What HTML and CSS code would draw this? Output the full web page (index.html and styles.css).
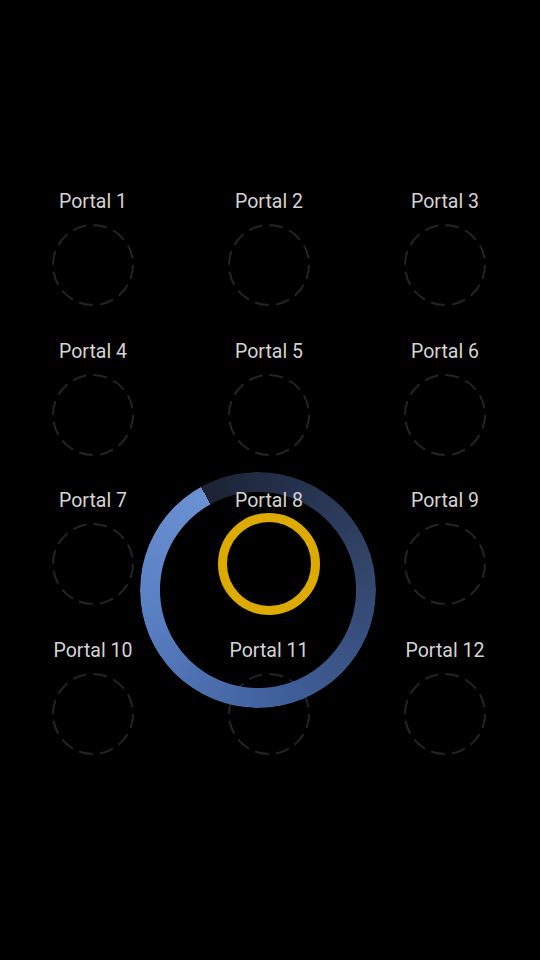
FILE: index.html
```html
<!DOCTYPE html>
<html>
<head>
<meta charset="utf-8">
<link rel="stylesheet" href="styles.css">
</head>
<body>
<div class="screen">
  <div class="grid">
    <div class="cell"><div class="label">Portal 1</div><svg class="portal" viewBox="0 0 84 84"><circle cx="42" cy="42" r="40"/></svg></div>
    <div class="cell"><div class="label">Portal 2</div><svg class="portal" viewBox="0 0 84 84"><circle cx="42" cy="42" r="40"/></svg></div>
    <div class="cell"><div class="label">Portal 3</div><svg class="portal" viewBox="0 0 84 84"><circle cx="42" cy="42" r="40"/></svg></div>
    <div class="cell"><div class="label">Portal 4</div><svg class="portal" viewBox="0 0 84 84"><circle cx="42" cy="42" r="40"/></svg></div>
    <div class="cell"><div class="label">Portal 5</div><svg class="portal" viewBox="0 0 84 84"><circle cx="42" cy="42" r="40"/></svg></div>
    <div class="cell"><div class="label">Portal 6</div><svg class="portal" viewBox="0 0 84 84"><circle cx="42" cy="42" r="40"/></svg></div>
    <div class="cell"><div class="label">Portal 7</div><svg class="portal" viewBox="0 0 84 84"><circle cx="42" cy="42" r="40"/></svg></div>
    <div class="cell"><div class="label">Portal 8</div><div class="selected"></div></div>
    <div class="cell"><div class="label">Portal 9</div><svg class="portal" viewBox="0 0 84 84"><circle cx="42" cy="42" r="40"/></svg></div>
    <div class="cell"><div class="label">Portal 10</div><svg class="portal" viewBox="0 0 84 84"><circle cx="42" cy="42" r="40"/></svg></div>
    <div class="cell"><div class="label">Portal 11</div><svg class="portal" viewBox="0 0 84 84"><circle cx="42" cy="42" r="40"/></svg></div>
    <div class="cell"><div class="label">Portal 12</div><svg class="portal" viewBox="0 0 84 84"><circle cx="42" cy="42" r="40"/></svg></div>
  </div>
  <div class="progress-ring"></div>
</div>
</body>
</html>
```
FILE: styles.css
```css
html, body {
  margin: 0;
  padding: 0;
  background: #000;
}
.screen {
  position: relative;
  width: 540px;
  height: 960px;
  overflow: hidden;
  background: #000;
  font-family: Roboto, "Noto Sans", sans-serif;
}
.grid {
  display: grid;
  grid-template-columns: repeat(3, 176px);
  row-gap: 33.5px;
  padding: 190px 0 0 5px;
}
.cell {
  display: flex;
  flex-direction: column;
  align-items: center;
  gap: 12px;
}
.label {
  position: relative;
  z-index: 2;
  font-size: 19.5px;
  line-height: 22px;
  height: 22px;
  margin-top: 1px;
  margin-bottom: -1px;
  color: #d4d4d4;
}
.portal {
  width: 84px;
  height: 84px;
  margin: -1px 0;
  display: block;
}
.portal circle {
  fill: none;
  stroke: #242424;
  stroke-width: 2;
  stroke-dasharray: 14 6.94;
}
.selected {
  position: relative;
  z-index: 2;
  width: 102px;
  height: 102px;
  margin: -10px 0;
  box-sizing: border-box;
  border-radius: 50%;
  border: 9px solid #ddaa00;
  box-shadow: inset 0 0 2px 1px #000, 0 0 1px #000;
}
.progress-ring {
  position: absolute;
  z-index: 1;
  left: 140px;
  top: 472px;
  width: 236px;
  height: 236px;
  border-radius: 50%;
  background: conic-gradient(from 331deg, #1b2333 0%, #24304a 12%, #33456a 30%, #40609c 55%, #5a80c4 80%, #6b91d3 100%);
  -webkit-mask: radial-gradient(circle, transparent 97.5px, #000 98.5px);
  mask: radial-gradient(circle, transparent 97.5px, #000 98.5px);
}
```
